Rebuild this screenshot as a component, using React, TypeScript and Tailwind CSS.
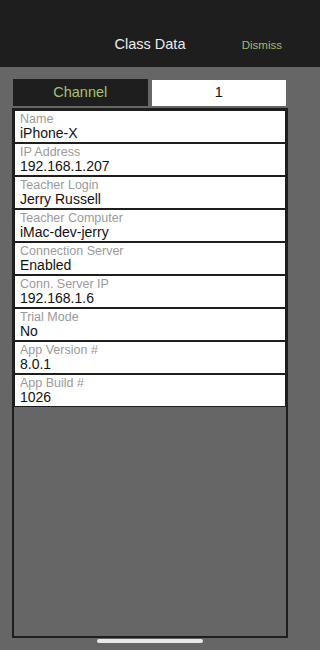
import React from "react";

const rows: [string, string][] = [
  ["Name", "iPhone-X"],
  ["IP Address", "192.168.1.207"],
  ["Teacher Login", "Jerry Russell"],
  ["Teacher Computer", "iMac-dev-jerry"],
  ["Connection Server", "Enabled"],
  ["Conn. Server IP", "192.168.1.6"],
  ["Trial Mode", "No"],
  ["App Version #", "8.0.1"],
  ["App Build #", "1026"],
];

export default function App() {
  return (
    <div
      className="w-full h-[650px] flex flex-col bg-[#666666] overflow-hidden"
      style={{ fontFamily: '"Liberation Sans", Arial, sans-serif' }}
    >
      <div className="h-[67px] shrink-0 bg-[#1e1e1e] pt-[36px]">
        <div className="w-[300px] grid grid-cols-[1fr_auto_1fr] items-baseline leading-[16px]">
          <div />
          <div className="text-[14.5px] text-[#ececec]">Class Data</div>
          <div className="text-right pr-[18px] text-[11.5px] text-[#a3bb6c]">Dismiss</div>
        </div>
      </div>
      <div className="w-[300px] flex flex-col">
        <div className="pt-[12px] pl-[13px] pr-[14px] flex gap-[4px]">
          <div className="flex-1 h-[27px] bg-[#1e1e1e] flex items-center justify-center text-[14.5px] text-[#a8c070]">
            Channel
          </div>
          <div className="flex-1 h-[26px] mt-[1px] bg-white flex items-center justify-center text-[14.5px] text-[#111]">
            1
          </div>
        </div>
        <div className="pt-[2px] px-[12px]">
          <div className="h-[530px] border-2 border-[#1e1e1e] flex flex-col">
            {rows.map(([label, value]) => (
              <div
                key={label}
                className="box-border h-[33px] shrink-0 border-[1.5px] border-[#1e1e1e] bg-white pl-[5px] pt-[2px] flex flex-col"
              >
                <div className="text-[12.5px] leading-[13px] text-[#9a9a9a]">{label}</div>
                <div className="text-[14px] leading-[15px] text-[#111]">{value}</div>
              </div>
            ))}
          </div>
        </div>
        <div className="mt-[1px] mx-auto h-[4px] w-[106px] rounded-full bg-[#e8e8e8]" />
      </div>
    </div>
  );
}
